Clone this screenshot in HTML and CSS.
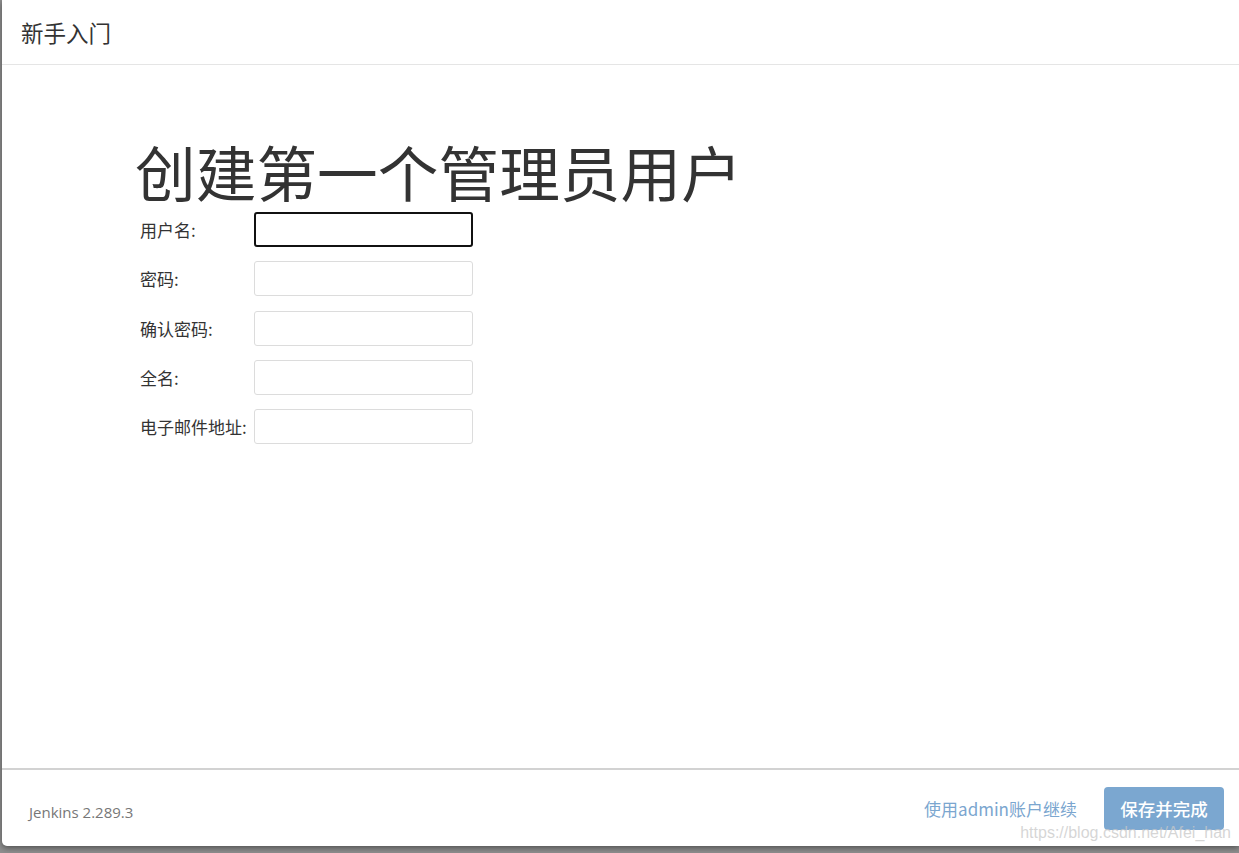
FILE: index.html
```html
<!DOCTYPE html>
<html lang="zh-CN">
<head>
<meta charset="utf-8">
<title>新手入门</title>
<link rel="stylesheet" href="styles.css">
</head>
<body>
<div class="modal">
  <header class="modal-header">新手入门</header>
  <main class="modal-body">
    <h1 class="title">创建第一个管理员用户</h1>
    <form class="form">
      <div class="row"><label class="label">用户名:</label><input class="input focused" type="text"></div>
      <div class="row"><label class="label">密码:</label><input class="input" type="password"></div>
      <div class="row"><label class="label">确认密码:</label><input class="input" type="password"></div>
      <div class="row"><label class="label">全名:</label><input class="input" type="text"></div>
      <div class="row"><label class="label">电子邮件地址:</label><input class="input" type="text"></div>
    </form>
  </main>
  <footer class="modal-footer">
    <span class="version">Jenkins 2.289.3</span>
    <div class="actions">
      <a class="link">使用admin账户继续</a>
      <button class="btn" type="button">保存并完成</button>
    </div>
    <span class="watermark">https://blog.csdn.net/Afei_han</span>
  </footer>
</div>
</body>
</html>
```
FILE: styles.css
```css
html, body {
  margin: 0;
  padding: 0;
  height: 853px;
  overflow: hidden;
}
body {
  background: #8f8f8f;
  font-family: "Noto Sans CJK SC", "Microsoft YaHei", sans-serif;
  color: #333;
}
.modal {
  margin-left: 2px;
  height: 846px;
  background: #fff;
  display: flex;
  flex-direction: column;
  border-bottom-left-radius: 5px;
  box-shadow: 0 2px 6px rgba(0,0,0,0.45);
}
.modal-header {
  height: 65px;
  box-sizing: border-box;
  border-bottom: 1px solid #e5e5e5;
  display: flex;
  align-items: center;
  padding-left: 19px;
  font-size: 22.5px;
  color: #333;
}
.modal-body {
  flex: 1;
  padding: 73px 0 0 133px;
}
.title {
  margin: 0 0 8px;
  font-size: 60.7px;
  line-height: 66px;
  font-weight: normal;
  color: #333;
}
.form {
  display: flex;
  flex-direction: column;
  gap: 14.25px;
  padding-left: 5px;
}
.row {
  display: flex;
  align-items: center;
}
.label {
  width: 114px;
  font-size: 17px;
  color: #333;
  white-space: nowrap;
}
.input {
  width: 219px;
  height: 35px;
  box-sizing: border-box;
  border: 1px solid #dcdcdc;
  border-radius: 3px;
  margin: 0;
  padding: 0 6px;
  outline: none;
  background: #fff;
}
.input.focused {
  border: 2px solid #111;
}
.modal-footer {
  position: relative;
  height: 78px;
  box-sizing: border-box;
  border-top: 2px solid #d2d2d2;
  display: flex;
  align-items: center;
  justify-content: space-between;
  padding: 0 15px 0 27px;
}
.version {
  font-family: "Open Sans", "Noto Sans", sans-serif;
  font-size: 15px;
  color: #777;
  margin-top: 7px;
}
.actions {
  display: flex;
  align-items: center;
  gap: 27px;
}
.link {
  color: #7ba6cf;
  font-size: 17px;
  cursor: pointer;
}
.btn {
  width: 120px;
  height: 43px;
  border: none;
  border-radius: 4px;
  background: #7ba7d0;
  color: #fff;
  font-family: "Noto Sans CJK SC", sans-serif;
  font-size: 17.5px;
  font-weight: 500;
  padding: 0;
}
.watermark {
  position: absolute;
  right: 8px;
  bottom: 4px;
  font-family: "Liberation Sans", Arial, sans-serif;
  font-size: 16px;
  color: rgba(200,200,200,0.75);
  pointer-events: none;
}
```
